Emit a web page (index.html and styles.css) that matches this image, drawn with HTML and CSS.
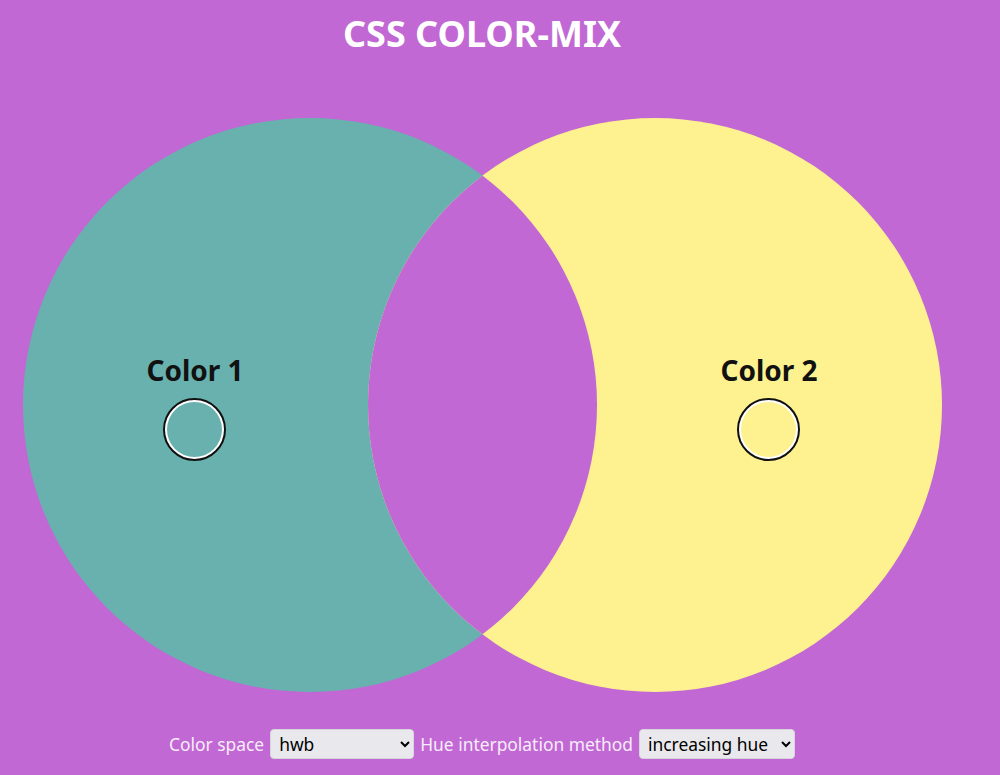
FILE: index.html
```html
<!DOCTYPE html>
<html lang="en">
<head>
<meta charset="utf-8">
<title>CSS color-mix</title>
<link rel="stylesheet" href="styles.css">
</head>
<body>
<main class="app">
  <h1 class="title">CSS COLOR-MIX</h1>

  <section class="venn">
    <div class="circle circle-one">
      <label class="picker">
        <span class="picker-name">Color 1</span>
        <input class="picker-input" type="color" value="#68b1ae">
      </label>
    </div>
    <div class="circle circle-two">
      <label class="picker">
        <span class="picker-name">Color 2</span>
        <input class="picker-input" type="color" value="#fef18f">
      </label>
    </div>
  </section>

  <form class="controls">
    <label class="control">
      Color space
      <select class="select select-space">
        <option>srgb</option>
        <option>srgb-linear</option>
        <option>lab</option>
        <option>oklab</option>
        <option>xyz</option>
        <option>hsl</option>
        <option selected>hwb</option>
        <option>lch</option>
        <option>oklch</option>
      </select>
    </label>
    <label class="control">
      Hue interpolation method
      <select class="select select-hue">
        <option>shorter hue</option>
        <option>longer hue</option>
        <option selected>increasing hue</option>
        <option>decreasing hue</option>
      </select>
    </label>
  </form>
</main>
</body>
</html>
```

FILE: styles.css
```css
html, body {
  margin: 0;
  padding: 0;
}

body {
  background: #c168d4;
  font-family: "Noto Sans", "Open Sans", sans-serif;
  color: #fff;
}

.app {
  width: 964px;
  display: flex;
  flex-direction: column;
  align-items: center;
}

.title {
  margin: 12px 0 63px;
  font-size: 36px;
  line-height: 1.2;
  font-weight: 700;
  color: #fff;
}

/* two overlapping discs; the overlap is painted in the mixed colour */
.venn {
  display: flex;
  justify-content: center;
  width: 100%;
}

.circle {
  box-sizing: border-box;
  width: 574px;
  height: 574px;
  flex: none;
  border-radius: 50%;
  display: flex;
  flex-direction: column;
  align-items: center;
  justify-content: center;
  padding-top: 5px;
}

.circle-one {
  background: #68b1ae;
  padding-right: 229px;
}

.circle-two {
  position: relative;
  overflow: hidden;
  margin-left: -229px;
  background: #fef18f;
  padding-left: 229px;
}

.circle-two::before {
  content: "";
  position: absolute;
  top: 0;
  left: -345px;
  width: 574px;
  height: 574px;
  border-radius: 50%;
  background: #c168d4;
}

.picker {
  position: relative;
  display: flex;
  flex-direction: column;
  align-items: center;
  gap: 11px;
}

.picker-name {
  font-size: 28px;
  line-height: 1.2;
  font-weight: 700;
  color: #111;
}

.picker-input {
  -webkit-appearance: none;
  appearance: none;
  box-sizing: border-box;
  width: 63px;
  height: 63px;
  margin: 0;
  padding: 0;
  border: 2px solid #111;
  border-radius: 50%;
  background: #fff;
  cursor: pointer;
}

.picker-input::-webkit-color-swatch-wrapper {
  padding: 2px;
}

.picker-input::-webkit-color-swatch {
  border: none;
  border-radius: 50%;
}

.controls {
  margin-top: 37px;
  display: flex;
  align-items: center;
  gap: 6px;
}

.control {
  display: flex;
  align-items: center;
  gap: 6px;
  font-size: 17.4px;
  color: #f8ecfa;
}

.select {
  box-sizing: border-box;
  height: 30px;
  font-family: "Noto Sans", "Open Sans", sans-serif;
  font-size: 17.4px;
  color: #000;
  background: #e9e9ed;
  border: 1px solid #d6d6dc;
  border-radius: 4px;
  padding: 0 4px;
}

.select-space {
  width: 144px;
}

.select-hue {
  width: 156px;
}
```
